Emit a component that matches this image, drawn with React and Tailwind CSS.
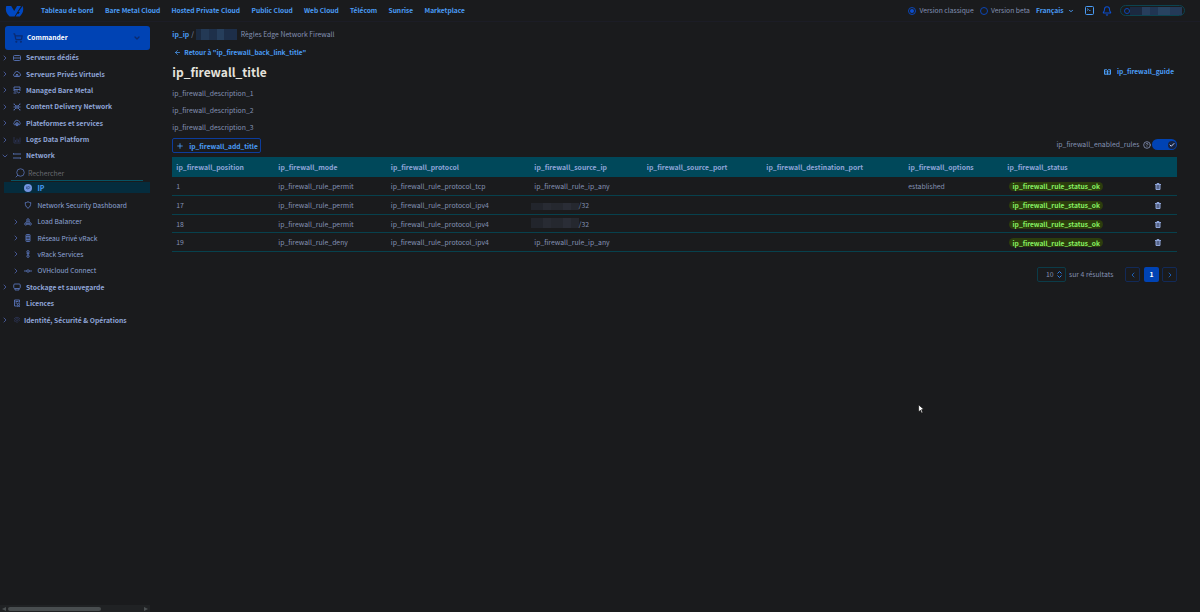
import React from 'react';
import { ShoppingCart, ChevronDown, ChevronRight, ChevronLeft, ArrowLeft, Plus, Bell, CircleHelp, Check } from 'lucide-react';

const NAV = [
  { label: 'Tableau de bord', width: 'w-16' },
  { label: 'Bare Metal Cloud', width: 'w-[66.5px]' },
  { label: 'Hosted Private Cloud', width: 'w-20' },
  { label: 'Public Cloud', width: 'w-[52.5px]' },
  { label: 'Web Cloud', width: 'w-[46px]' },
  { label: 'Télécom', width: 'w-[38.5px]' },
  { label: 'Sunrise', width: 'w-9' },
  { label: 'Marketplace', width: 'w-12' },
];

const TOP_MENU = [
  { label: 'Serveurs dédiés', icon: 'server', height: 'h-[17px]' },
  { label: 'Serveurs Privés Virtuels', icon: 'cloud', height: 'h-4' },
  { label: 'Managed Bare Metal', icon: 'managed', height: 'h-4' },
  { label: 'Content Delivery Network', icon: 'cdn', height: 'h-[17px]' },
  { label: 'Plateformes et services', icon: 'platform', height: 'h-4' },
  { label: 'Logs Data Platform', icon: 'logs', height: 'h-[17px]', dim: true },
  { label: 'Network', icon: 'network', height: 'h-[15px]', open: true },
];

const NETWORK_MENU = [
  { label: 'Network Security Dashboard', icon: 'shield', height: 'h-4', leaf: true },
  { label: 'Load Balancer', icon: 'balancer', height: 'h-[17px]' },
  { label: 'Réseau Privé vRack', icon: 'rack', height: 'h-4' },
  { label: 'vRack Services', icon: 'services', height: 'h-4' },
  { label: 'OVHcloud Connect', icon: 'connect', height: 'h-[17px]' },
];

const BOTTOM_MENU = [
  { label: 'Stockage et sauvegarde', icon: 'storage', height: 'h-4' },
  { label: 'Licences', icon: 'licence', height: 'h-4', leaf: true },
  { label: 'Identité, Sécurité & Opérations', icon: 'identity', height: 'h-[18px]', dim: true, tight: true },
];

const COLUMNS = ['position', 'mode', 'protocol', 'source_ip', 'source_port', 'destination_port', 'options', 'status'];

const GRID = 'grid grid-cols-[102px_112.5px_143.5px_112.5px_119.5px_142px_99px_146px_1fr] items-center pl-1';

const RULES = [
  { position: 1, mode: 'permit', protocol: 'tcp', options: 'established' },
  { position: 17, mode: 'permit', protocol: 'ipv4', masked: true },
  { position: 18, mode: 'permit', protocol: 'ipv4', masked: true },
  { position: 19, mode: 'deny', protocol: 'ipv4' },
];

const ICONS = {
  server: <><rect x="1" y="3" width="14" height="10" rx="2" /><path d="M1 8h14" /></>,
  cloud: <><path d="M4 13a3 3 0 0 1-1-5.8A5 5 0 0 1 12.5 6 3.6 3.6 0 0 1 12 13z" /><path d="M5.5 10.5 8 8l2.5 2.5z" /></>,
  managed: <path d="M14 2H2v5h12zM2 7v3h8M14 7v3M1 14h6M9 12l2 2 3-2" />,
  cdn: <><circle cx="8" cy="8" r="2.5" /><path d="m2 2 4.5 4.5M14 2 9.5 6.5M2 14l4.5-4.5M14 14 9.5 9.5M1 8h5M10 8h5M1 2h2M13 2h2M1 14h2M13 14h2" /></>,
  platform: <><path d="M4 12a3 3 0 0 1-1-5.5A5 5 0 0 1 12.5 5.5 3.5 3.5 0 0 1 12 12" /><circle cx="8" cy="10.5" r="3" /><path d="M8 7v7M5 10.5h6" /></>,
  logs: <path d="M2 2v12h13M5 12V8M8 12V5M11 12V7M14 12V3" />,
  network: <path d="M0 4h16M0 12h16M2 3 0 4M14 13l2-1" />,
  shield: <path d="M8 1.5c2 1.400 3.800 1.700 5.500 1.700 0 5.200-1.500 9-5.500 11.300C4 12.200 2.500 8.400 2.500 3.200 4.200 3.200 6 2.900 8 1.500z" />,
  balancer: <><circle cx="8" cy="4" r="2.500" /><circle cx="3.500" cy="12" r="2.200" /><circle cx="12.500" cy="12" r="2.200" /><circle cx="8" cy="12" r="1.200" /><path d="M6 6 4 9.500M10 6l2 3.500M8 7v4" /></>,
  rack: <><rect x="4" y="1" width="8" height="14" rx="1" /><path d="M4 5h8M4 8h8M4 11h8M7 3h2M7 13h2" /></>,
  services: <><circle cx="8" cy="3.500" r="2.300" /><circle cx="8" cy="12.500" r="2.300" /><path d="M8 6v4M5 6.500l3 1.500 3-1.500" /></>,
  connect: <><path d="M0 8h5M11 8h5" /><ellipse cx="8" cy="8" rx="3" ry="2.200" /></>,
  storage: <><rect x="1.500" y="2" width="13" height="9" rx="2" /><path d="M4 11v3h8v-3" /></>,
  licence: <><path d="M13 7V2H3v12h5M5 5h6M5 8h3" /><circle cx="11" cy="10.500" r="2.200" /><path d="m9.500 12.500-.5 3 2-1 2 1-.5-3" /></>,
  identity: <path d="M3 11a5 5 0 0 1 10-1M5.500 12a2.500 2.500 0 0 1 5-1M2 6a7 7 0 0 1 12 0M8 11v3" />,
};

const MenuIcon = ({ name, dim }) => (
  <svg
    viewBox="0 0 16 16"
    className={`size-2 shrink-0 fill-none stroke-[1.8] ${dim ? 'stroke-[#2b3352]' : 'stroke-[#5874b8]'}`}
  >
    {ICONS[name]}
  </svg>
);

const MenuRow = ({ item, nested }) => {
  const Chevron = item.open ? ChevronDown : ChevronRight;
  return (
    <div className={`flex items-center ${item.height} ${nested ? 'pl-3' : 'pl-px'}`}>
      <Chevron className={`size-2 shrink-0 text-[#4d62a8] ${item.leaf ? 'invisible' : ''}`} strokeWidth={2.5} />
      <div className={`flex ${item.tight ? 'ml-1 -mr-[2px]' : 'ml-1'}`}>
        <MenuIcon name={item.icon} dim={item.dim} />
      </div>
      <span className={`whitespace-nowrap ${nested ? 'ml-[5.5px] text-[6.7px]' : 'ml-[5px] text-[6.75px] font-bold'}`}>
        {item.label}
      </span>
    </div>
  );
};

const Logo = () => (
  <svg viewBox="0 0 19 12" className="h-3 w-[19px] fill-[#0048c2]">
    <path d="M1.300 1h4.900l3 5L12 1h4L9.600 11.500H4.700C.9 8.500.3 4.500 1.300 1z" />
    <path d="M17.700 1c1.200 3.500.5 7.500-3 10.500H10.600l1.600-2.700h1.500l1-1.700h-1.400z" />
  </svg>
);

const TopBar = () => (
  <header className="flex h-[22px] items-center border-b border-[#1c1d26] pl-[5px] font-bold text-[#4a9cf5]">
    <Logo />
    <nav className="ml-[17px] flex text-[6.65px]">
      {NAV.map((item) => (
        <a key={item.label} className={`whitespace-nowrap ${item.width}`}>{item.label}</a>
      ))}
    </nav>
    <div className="ml-auto flex items-center pr-[15px] text-[6.75px]">
      <span className="flex size-2 items-center justify-center rounded-full border border-[#0c46b5]">
        <span className="size-1 rounded-full bg-[#0c4fd0]" />
      </span>
      <span className="ml-[3.5px] w-[60px] whitespace-nowrap font-normal text-[#8492b4]">Version classique</span>
      <span className="size-2 rounded-full border border-[#0c46b5]" />
      <span className="ml-[3.5px] w-[45px] whitespace-nowrap font-normal text-[#8492b4]">Version beta</span>
      <span className="w-8">Français</span>
      <ChevronDown className="size-[6px]" strokeWidth={4} />
      <svg viewBox="0 0 18 18" className="ml-[11px] size-[9px] fill-none stroke-[#4a9cf5] stroke-2">
        <rect x="1" y="1" width="16" height="16" rx="2" />
        <path d="m4 5 3 2-3 2M8 9h3" strokeWidth="1.5" />
      </svg>
      <Bell className="ml-2 size-[10px] text-[#0c4fd0]" strokeWidth={2.5} />
      <div className="ml-2 flex h-[11px] w-[65px] items-center rounded-full border border-[#0b4450] pl-[3px]">
        <span className="size-[6px] rounded-full border border-[#0c46b5]" />
        <div className="mt-px flex h-2 flex-1">
          <span className="w-3 bg-[#1b2940]" />
          <span className="w-2 bg-[#273e5c]" />
          <span className="w-2 bg-[#203552]" />
          <span className="w-3 bg-[#284360]" />
          <span className="w-3 bg-[#243a58]" />
        </div>
      </div>
    </div>
  </header>
);

const Sidebar = () => (
  <aside className="flex w-[150px] shrink-0 flex-col text-[#8fa5d8]">
    <button className="ml-[5px] mt-[3.5px] flex h-[24px] w-[145px] shrink-0 items-center rounded-[3px] bg-[#0043b4] pl-2 pr-[9px] text-[6.65px] font-bold text-white">
      <ShoppingCart className="size-[10px] text-[#0a2a70]" strokeWidth={3} />
      <span className="ml-1">Commander</span>
      <ChevronDown className="ml-auto size-2 text-[#0a2a70]" strokeWidth={4} />
    </button>
    <div className="-mt-[.5px]">
      {TOP_MENU.map((item) => <MenuRow key={item.label} item={item} />)}
    </div>
    <div className="ml-[11px] flex h-[18px] w-[132px] items-center border-b border-[#075465] pl-1 pt-[3px] text-[6.85px] text-[#676a70]">
      <svg viewBox="0 0 20 20" className="size-[10px] fill-none stroke-[#5874b8] stroke-[1.6]">
        <circle cx="11" cy="9" r="7.5" />
        <path d="m6 14-4.5 4.5" />
      </svg>
      <span className="ml-[3px]">Rechercher</span>
    </div>
    <div className="ml-1 mt-px flex h-[11px] items-center bg-[#052c3d] pl-5 pt-px text-[6.85px] font-bold text-[#4a9cf5]">
      <svg viewBox="0 0 16 16" className="size-2">
        <circle cx="8" cy="8" r="8" className="fill-[#7294df]" />
        <path d="M5 5v5M7.500 11V5h2a2 2 0 0 1 0 4h-2" className="fill-none stroke-[#29477f] stroke-[1.3]" />
      </svg>
      <span className="ml-[5.5px]">IP</span>
    </div>
    <div className="mt-1">
      {NETWORK_MENU.map((item) => <MenuRow key={item.label} item={item} nested />)}
      {BOTTOM_MENU.map((item) => <MenuRow key={item.label} item={item} />)}
    </div>
    <div className="mt-auto flex h-[7px] items-center bg-[#202224] px-[2px]">
      <svg viewBox="0 0 4 4" className="size-1 fill-[#4b5052]"><path d="M4 0v4L0 2z" /></svg>
      <div className="ml-[2px] h-1 w-[93px] rounded-full bg-[#484d4f]" />
      <svg viewBox="0 0 4 4" className="ml-auto size-1 fill-[#4b5052]"><path d="M0 0v4l4-2z" /></svg>
    </div>
  </aside>
);

const GuideIcon = () => (
  <svg viewBox="0 0 14 12" className="mr-[5.5px] h-[6px] w-[7px] fill-none stroke-[#4a9cf5] stroke-2">
    <path d="M1 1.500h4.500L7 3l1.500-1.500H13v9H8.500L7 11l-1.500-.5H1zM7 3v8M3 5h2M3 8h2M9 5h2M9 8h2" />
  </svg>
);

const TrashIcon = () => (
  <svg viewBox="0 0 12 14" className="h-[7px] w-[6px] fill-[#56658a] stroke-[#8fa5d8] stroke-2">
    <path d="M0 3h12M4 3V1h4v2M2 3v10h8V3" />
  </svg>
);

const MaskedIp = ({ lower }) => (
  <span className="-ml-[3.5px] flex items-center">
    <span className={`flex w-[48px] ${lower ? 'mt-[3px] h-[7px]' : '-mt-[3px] h-[10px]'}`}>
      <span className="w-3 bg-[#22252c]" />
      <span className="w-2 bg-[#282b33]" />
      <span className="w-3 bg-[#25282f]" />
      <span className="w-2 bg-[#2a2d36]" />
      <span className="w-2 bg-[#25282f]" />
    </span>
    <span>/32</span>
  </span>
);

const RuleRow = ({ rule }) => (
  <div className={`${GRID} h-[18.75px] border-b border-[#07414d] pt-[1.5px]`}>
    <span>{rule.position}</span>
    <span>ip_firewall_rule_{rule.mode}</span>
    <span>ip_firewall_rule_protocol_{rule.protocol}</span>
    {rule.masked ? <MaskedIp lower={rule.position === 17} /> : <span>ip_firewall_rule_ip_any</span>}
    <span />
    <span />
    <span>{rule.options}</span>
    <span>
      <span className="ml-[2px] flex h-[9px] w-[94px] items-center justify-center rounded-full bg-[#2c3d0d] text-[6.65px] font-bold text-[#86ee62]">
        ip_firewall_rule_status_ok
      </span>
    </span>
    <span className="pl-[2px]"><TrashIcon /></span>
  </div>
);

const Pagination = () => (
  <div className="mt-[15px] flex h-[15px] items-center justify-end text-[6.85px]">
    <div className="flex h-[15px] w-[29px] items-center rounded-[2px] border border-[#0b3c49] pl-2">
      10
      <svg viewBox="0 0 10 14" className="ml-[3px] h-[7px] w-[5px] fill-none stroke-[#2f80e8] stroke-2">
        <path d="m1 5 4-4 4 4M1 9l4 4 4-4" />
      </svg>
    </div>
    <span className="ml-[3px] w-[56px] whitespace-nowrap">sur 4 résultats</span>
    <span className="flex size-[15px] items-center justify-center rounded-[2px] border border-[#122a58]">
      <ChevronLeft className="size-2 text-[#1d5cae]" strokeWidth={3} />
    </span>
    <span className="ml-1 flex size-[15px] items-center justify-center rounded-[2px] bg-[#0043b4] font-bold text-white">1</span>
    <span className="ml-[3px] flex size-[15px] items-center justify-center rounded-[2px] border border-[#122a58]">
      <ChevronRight className="size-2 text-[#1d5cae]" strokeWidth={3} />
    </span>
  </div>
);

const Firewall = () => (
  <main className="flex-1 pl-[22.3px] pr-[23px] text-[6.85px] text-[#8492b4]">
    <div className="flex h-[23px] items-center whitespace-nowrap pt-px">
      <span className="font-bold text-[#4a9cf5]">ip_ip</span>
      <span className="ml-[2px]">/</span>
      <span className="ml-[2px] mr-1 flex h-[11px] w-[41px]">
        <span className="w-[5px] bg-[#1b2a40]" />
        <span className="w-2 bg-[#233955]" />
        <span className="w-2 bg-[#1e304a]" />
        <span className="w-[7px] bg-[#263e5b]" />
        <span className="w-[13px] bg-[#1d2e48]" />
      </span>
      <span>Règles Edge Network Firewall</span>
    </div>
    <div className="flex h-[14px] items-center pl-[2px] pt-px text-[6.5px] font-bold text-[#4a9cf5]">
      <ArrowLeft className="size-[7px]" strokeWidth={2.5} />
      <span className="ml-[3px]">Retour à "ip_firewall_back_link_title"</span>
    </div>
    <div className="flex h-[25px] items-center justify-between">
      <h1 className="text-[12px] font-bold text-[#e4e2dc]">ip_firewall_title</h1>
      <a className="flex items-center pr-[3px] text-[6.65px] font-bold text-[#4a9cf5]">
        <GuideIcon />
        ip_firewall_guide
      </a>
    </div>
    <div className="pt-px">
      <p className="h-[17px] leading-[17px]">ip_firewall_description_1</p>
      <p className="h-[17px] leading-[17px]">ip_firewall_description_2</p>
      <p className="h-[17px] leading-[17px]">ip_firewall_description_3</p>
    </div>
    <div className="flex h-[21px] items-start justify-between pt-[2px]">
      <button className="flex h-[15px] w-[89px] items-center rounded-[2px] border border-[#0c3c9c] pl-[3px] pt-px text-[6.65px] font-bold text-[#4a9cf5]">
        <Plus className="size-2" strokeWidth={2.5} />
        <span className="ml-[5px]">ip_firewall_add_title</span>
      </button>
      <div className="flex items-center pt-px">
        <span>ip_firewall_enabled_rules</span>
        <CircleHelp className="ml-[3px] mr-[1.5px] size-2" strokeWidth={2.5} />
        <span className="flex h-[11px] w-[25px] items-center justify-end rounded-full bg-[#0043b4] pr-[1.5px]">
          <span className="flex size-2 items-center justify-center rounded-full bg-[#18233f]">
            <Check className="size-[6px] text-[#c3d6ff]" strokeWidth={4} />
          </span>
        </span>
      </div>
    </div>
    <div className={`${GRID} h-5 bg-[#00485a] font-bold text-[#8fa5d8]`}>
      {COLUMNS.map((name) => <span key={name}>ip_firewall_{name}</span>)}
    </div>
    {RULES.map((rule) => <RuleRow key={rule.position} rule={rule} />)}
    <Pagination />
  </main>
);

export default function App() {
  return (
    <div className="relative flex h-[612px] w-[1200px] flex-col overflow-hidden bg-[#1a1b1d] font-['Noto_Sans_CJK_JP','Open_Sans',sans-serif] leading-none">
      <TopBar />
      <div className="flex min-h-0 flex-1">
        <Sidebar />
        <Firewall />
      </div>
      <svg viewBox="0 0 10 16" className="absolute left-[918px] top-[404px] h-[10px] w-[6px] fill-white stroke-black">
        <path d="M1 1v12l3-3 2 5 2-1-2-5h4z" />
      </svg>
    </div>
  );
}
